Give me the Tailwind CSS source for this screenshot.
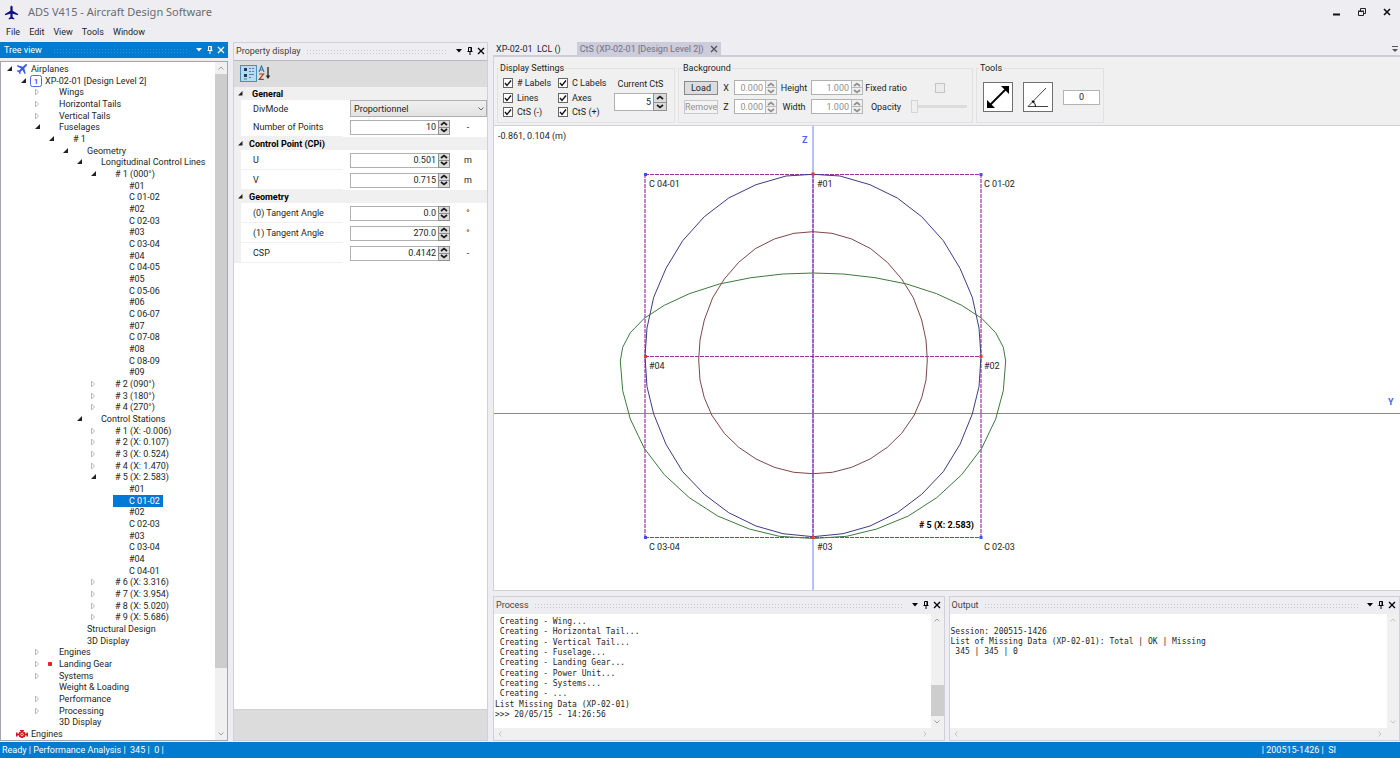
<!DOCTYPE html>
<html lang="en">
<head>
<meta charset="utf-8">
<title>ADS V415 - Aircraft Design Software</title>
<script src="https://cdn.jsdelivr.net/npm/@tailwindcss/browser@4"></script>
</head>
<body class="flex h-screen flex-col overflow-hidden bg-[#eeeef2] font-[Roboto,sans-serif] text-[9px] leading-[12px] text-[#1e1e1e]">

<svg class="hidden" aria-hidden="true">
  <symbol id="plane" viewBox="0 0 24 24"><path d="M12 1c-1.100 0-1.800 1-1.800 2.400V9L1.500 14.300v2.200L10.200 14v5.200L7.600 21.200V23l4.400-1.200L16.400 23v-1.800l-2.600-2V14l8.700 2.500v-2.200L13.800 9V3.400C13.800 2 13.100 1 12 1z"/></symbol>
  <symbol id="down" viewBox="0 0 8 8"><path d="M1 2h6L4 5.500z"/></symbol>
  <symbol id="pin" viewBox="0 0 8 8"><path d="M2.500 .5h3v4h-3zM1.500 4.500h5M4 4.500V8" fill="none" stroke="currentColor"/><path d="M4.500 .5h1v4h-1z"/></symbol>
  <symbol id="close" viewBox="0 0 8 8"><path d="M1 1l6 6M7 1L1 7" fill="none" stroke="currentColor" stroke-width="1.300"/></symbol>
  <symbol id="chev" viewBox="0 0 8 8"><path d="M1.500 5.500L4 3l2.500 2.500" fill="none" stroke="currentColor"/></symbol>
</svg>

<header>
  <div class="flex h-6 items-center pr-[8px] pl-[4px]">
    <svg class="size-[15px] fill-[#10107e]"><use href="#plane"/></svg>
    <h1 class="ml-[9px] font-['Noto_Sans',sans-serif] text-[11px] text-[#6a6a70]">ADS V415 - Aircraft Design Software</h1>
    <div class="ml-auto flex items-center gap-[15px]">
      <button aria-label="Minimize" class="size-[10px]"><svg viewBox="0 0 10 10" class="size-[10px]"><path d="M1 7.500h7" stroke="#111" stroke-width="2"/></svg></button>
      <button aria-label="Restore" class="size-[10px]"><svg viewBox="0 0 10 10" class="size-[10px]" fill="none" stroke="#222"><path d="M1.500 4.500h5v4h-5zM1 4h6M3.500 4V1.500h5v5H7"/></svg></button>
      <button aria-label="Close" class="size-[10px]"><svg viewBox="0 0 10 10" class="size-[10px]"><path d="M2 2l6 6M8 2L2 8" stroke="#111" stroke-width="1.600"/></svg></button>
    </div>
  </div>
  <nav class="flex h-[18px] items-center gap-[9px] pb-[2px] pl-[6px]">
    <button>File</button><button>Edit</button><button>View</button><button>Tools</button><button>Window</button>
  </nav>
</header>

<main class="flex min-h-0 flex-1 pb-[1px]">

  <!-- Tree view -->
  <section class="flex w-[228px] shrink-0 flex-col">
    <div class="flex h-4 items-center gap-[3px] bg-[#007bd0] pr-[3px] pl-[4px] text-white">
      <h2>Tree view</h2>
      <div class="ml-[8px] h-[5px] flex-1 bg-[radial-gradient(#2f93da_1px,transparent_1px)] bg-[length:3px_3px]"></div>
      <button aria-label="Options" class="ml-[4px]"><svg class="size-[8px] fill-current"><use href="#down"/></svg></button>
      <button aria-label="Pin"><svg class="size-[8px] fill-current"><use href="#pin"/></svg></button>
      <button aria-label="Close panel"><svg class="size-[8px]"><use href="#close"/></svg></button>
    </div>
    <div class="mt-[3px] flex min-h-0 flex-1 border border-[#a5a5b0] bg-white">
      <ul id="tree" class="flex min-w-0 flex-1 flex-col pt-[1px]" role="tree"></ul>
      <div class="flex w-[12px] flex-col items-center bg-[#f0f0f0] text-[#a0a0a0]">
        <svg class="my-[2px] size-[8px]"><use href="#chev"/></svg>
        <div class="w-full grow-[593] basis-0 bg-[#cdcdcd]"></div>
        <div class="grow-[60] basis-0"></div>
        <svg class="my-[2px] size-[8px] rotate-180"><use href="#chev"/></svg>
      </div>
    </div>
  </section>

  <!-- Property display -->
  <section class="ml-[5px] flex w-[255px] shrink-0 flex-col border border-[#d0d0da]">
    <div class="flex h-[17px] items-center gap-[3px] pr-[2px] pb-[1px] pl-[2px] text-[#444]">
      <h2>Property display</h2>
      <div class="ml-[2px] h-[5px] flex-1 bg-[radial-gradient(#c9c9d0_1px,transparent_1px)] bg-[length:3px_3px]"></div>
      <button aria-label="Options" class="ml-[4px] text-black"><svg class="size-[8px] fill-current"><use href="#down"/></svg></button>
      <button aria-label="Pin" class="text-black"><svg class="size-[8px] fill-current"><use href="#pin"/></svg></button>
      <button aria-label="Close panel" class="text-black"><svg class="size-[8px]"><use href="#close"/></svg></button>
    </div>
    <div class="flex h-[27px] items-center border-t border-[#b8b8c0] bg-[#dcdcdc] pb-[2px] pl-[6px]">
      <button aria-label="Categorized" class="grid size-[17px] place-items-center border border-[#4a90b0] bg-[#b5dcf0]">
        <svg viewBox="0 0 14 14" class="size-[14px]"><path d="M2 2h3v3H2zM2 8h3v3H2z" fill="#1d3c50"/><path d="M7 2.500h2M10 2.500h2M7 5.500h2M10 5.500h2M7 8.500h5M7 11.500h2M2 13h3" stroke="#5c8298"/></svg>
      </button>
      <button aria-label="Sort alphabetically" class="ml-[1px] flex h-[17px] items-center">
        <svg viewBox="0 0 14 16" class="h-[16px] w-[14px]"><path d="M1 7l2.500-6L6 7M2 5h3" fill="none" stroke="#3c78b4" stroke-width="1.200"/><path d="M1.200 9h4.300L1.200 14.400h4.600" fill="none" stroke="#a03c28" stroke-width="1.200"/><path d="M10 2v10" stroke="#222" stroke-width="1.300"/><path d="M7.800 10.500h4.400L10 14z" fill="#222"/></svg>
      </button>
    </div>
    <div id="props" class="min-h-0 flex-1 bg-white"></div>
    <div class="h-[31px] border-t border-[#d0d0d0] bg-[#dcdcdc]"></div>
  </section>

  <!-- Documents -->
  <section class="ml-[5px] flex min-w-0 flex-1 flex-col">
    <div class="flex h-[15px] items-stretch border-b-2 border-[#ccccdb] pr-[1px] pl-[3px]">
      <div class="flex" role="tablist">
        <button role="tab" aria-selected="false" class="whitespace-pre">XP-02-01  LCL ()</button>
        <div class="ml-[16px] flex items-center gap-[6px] bg-[#ccccdb] px-[3px] text-[#717189]">
          <button role="tab" aria-selected="true">CtS (XP-02-01 [Design Level 2])</button>
          <button aria-label="Close tab"><svg class="size-[8px] text-[#555]"><use href="#close"/></svg></button>
        </div>
      </div>
      <button aria-label="Document list" class="ml-auto"><svg viewBox="0 0 8 8" class="size-[8px]"><path d="M1 1.500h6" stroke="#555"/><path d="M1 4h6L4 7z" fill="#555"/></svg></button>
    </div>
    <div class="flex h-[68px] gap-[3px] border-l border-[#d0d0da] bg-[#f0f0f0] pt-[5px] pl-[3px]">
      <fieldset class="h-[61px] w-[178px] border border-[#e2e2e4] pl-[1px]">
        <legend class="px-[1px]">Display Settings</legend>
        <div class="flex pt-[2px] pl-[4px]">
          <div id="checks" class="grid grid-cols-[55px_56px] grid-rows-[14px_15px_14px] items-center"></div>
          <div class="flex flex-col items-center gap-[3px] pt-[2px]">
            <label for="cts">Current CtS</label>
            <div data-spin="5" data-id="cts" data-size="lg"></div>
          </div>
        </div>
      </fieldset>
      <fieldset class="h-[61px] w-[295px] border border-[#e2e2e4] pl-[3px]">
        <legend class="px-[1px]">Background</legend>
        <div class="grid grid-cols-[34px_16px_43px_34px_52px_46px_58px] grid-rows-[15px_15px] items-center gap-y-[4px] pt-[6px] pl-[2px] text-center">
          <button class="h-[14px] border border-[#8a8a8a] bg-[#dddddd] leading-[12px]">Load</button>
          <label for="bx">X</label><div data-spin="0.000" data-id="bx" data-off="1"></div>
          <label for="bh">Height</label><div data-spin="1.000" data-id="bh" data-off="1"></div>
          <label for="fr">Fixed ratio</label>
          <input id="fr" type="checkbox" disabled class="ml-[4px] size-[10px] appearance-none justify-self-center border border-[#c4c4c4] bg-[#ececec]">
          <button disabled class="h-[14px] border border-[#c8c8c8] bg-[#f4f4f4] leading-[12px] text-[#909090]">Remove</button>
          <label for="bz">Z</label><div data-spin="0.000" data-id="bz" data-off="1"></div>
          <label for="bw">Width</label><div data-spin="1.000" data-id="bw" data-off="1"></div>
          <label for="op">Opacity</label>
          <input id="op" type="range" value="0" disabled class="ml-[2px] h-[13px] w-[56px] appearance-none bg-[linear-gradient(#dcdcdc,#dcdcdc)] bg-[length:100%_3px] bg-center bg-no-repeat [&::-webkit-slider-thumb]:h-[13px] [&::-webkit-slider-thumb]:w-[7px] [&::-webkit-slider-thumb]:appearance-none [&::-webkit-slider-thumb]:border [&::-webkit-slider-thumb]:border-[#d4d4d4] [&::-webkit-slider-thumb]:bg-[#f0f0f0]">
        </div>
      </fieldset>
      <fieldset class="h-[61px] w-[128px] border border-[#e2e2e4] pl-[2px]">
        <legend class="px-[1px]">Tools</legend>
        <div class="flex items-center gap-[10px] pt-[8px] pl-[4px]">
          <button aria-label="Measure distance" class="size-[30px] border border-[#707070] bg-white">
            <svg viewBox="0 0 28 28" class="size-[28px]"><path d="M6 22L22 6" stroke="#000" stroke-width="1.800"/><path d="M25 3v8l-8-8zM3 25v-8l8 8z"/></svg>
          </button>
          <button aria-label="Measure angle" class="size-[30px] border border-[#707070] bg-white">
            <svg viewBox="0 0 28 28" class="size-[28px]" fill="none" stroke="#444"><path d="M22 5L4 23.500h20"/><path d="M9 18.500q2.500 2 2.500 5" stroke="#000"/><path d="M7.500 17.500l3.500 .5-2 2.500z" fill="#000" stroke="none"/></svg>
          </button>
          <input aria-label="Measurement" value="0" class="h-[15px] w-[37px] border border-[#b4b4b4] bg-white text-center">
        </div>
      </fieldset>
    </div>

    <div class="min-h-0 flex-1 border-y border-l border-[#d0d0da] bg-white">
      <svg class="block h-full w-full" font-family="Roboto,sans-serif" font-size="9" fill="#1e1e1e">
        <g transform="translate(-494 -126)">
          <g stroke="#6c84ff"><path d="M494 413.500h3000"/><path d="M813 126v2000"/></g>
          <g fill="none" stroke="#a030a0" stroke-dasharray="4 1"><path d="M645 174.500h336M645 356.500h336M645 537.500h336"/><path stroke="#960096" d="M645 174v363M981 174v363M813 174v363"/></g>
          <g fill="none">
            <g id="half">
              <polyline stroke="#3c3c84" points="813,174.300 840,176 870,184.700 897.300,198 921.700,216.700 943.300,240.700 960,268.300 972.300,297.300 979,328 981,356.500 979,386.700 972.300,414 960,444.300 943.300,471.700 921.700,494.300 897.300,512.700 870,526 843,533.700 813,536.700"/>
              <polyline stroke="#7c4848" points="813,231.700 832,233.300 851.700,239 870.700,248.700 887.300,262.300 901.700,279 913.300,297.700 921.700,320 926,340 927.300,360 926,380 921.700,397.700 914.300,415 901.700,433.300 887.300,447.300 870,459 851.700,467.300 832.300,472.300 813,473.700"/>
              <polyline stroke="#3c7a3c" points="813,273 843.300,274 875,277.700 906.700,284 936.700,293.700 961.700,305.300 981.700,318.300 995.700,332.700 1003.300,347.300 1005.700,361 1003.300,390.700 995.700,419 981.700,448.300 961.700,474.700 936.700,497.700 908.300,516 876.700,529 846.700,536.300 813,538.500"/>
            </g>
            <use href="#half" transform="translate(1626 0) scale(-1 1)"/>
          </g>
          <g fill="#f03030"><path d="M811.500 172.500h3v3h-3zM979.500 355h3v3h-3zM811.500 536h3v3h-3zM644 355h3v3h-3z"/></g>
          <g fill="#3c50f0"><path d="M644 173h3v3h-3zM979.500 173h3v3h-3zM979.500 536h3v3h-3zM644 536h3v3h-3z"/></g>
          <text x="498" y="139">-0.861, 0.104 (m)</text>
          <text x="649" y="187">C 04-01</text><text x="817" y="187">#01</text><text x="984" y="187">C 01-02</text>
          <text x="649" y="369">#04</text><text x="984" y="369">#02</text>
          <text x="649" y="550">C 03-04</text><text x="817" y="550">#03</text><text x="984" y="550">C 02-03</text>
          <text x="919" y="528" font-weight="700" fill="#000"># 5 (X: 2.583)</text>
          <g font-weight="700" fill="#4a62f0"><text x="802" y="143">Z</text><text x="1388" y="405">Y</text></g>
        </g>
      </svg>
    </div>

    <div class="mt-[5px] flex h-[145px] gap-[4px]">
      <section class="flex min-w-0 flex-1 flex-col border border-[#d0d0da]">
        <div class="flex h-[17px] items-center gap-[3px] pr-[3px] pb-[1px] pl-[2px] text-[#444]">
          <h2>Process</h2>
          <div class="ml-[2px] h-[5px] flex-1 bg-[radial-gradient(#c9c9d0_1px,transparent_1px)] bg-[length:3px_3px]"></div>
          <button aria-label="Options" class="ml-[4px] text-black"><svg class="size-[8px] fill-current"><use href="#down"/></svg></button>
          <button aria-label="Pin" class="text-black"><svg class="size-[8px] fill-current"><use href="#pin"/></svg></button>
          <button aria-label="Close panel" class="text-black"><svg class="size-[8px]"><use href="#close"/></svg></button>
        </div>
        <div class="flex min-h-0 flex-1 bg-white">
          <div id="process" class="flex min-w-0 flex-1 flex-col pt-[3px] pb-[8px] pl-[1px] font-['DejaVu_Sans_Mono',monospace] text-[8px] leading-[10px] whitespace-pre"></div>
          <div class="flex w-[13px] flex-col items-center bg-[#f0f0f0] text-[#a0a0a0]">
            <svg class="my-[2px] size-[8px]"><use href="#chev"/></svg>
            <div class="flex-1"></div>
            <div class="h-[31px] w-full bg-[#cdcdcd]"></div>
            <svg class="my-[2px] size-[8px] rotate-180"><use href="#chev"/></svg>
          </div>
        </div>
        <div class="flex h-[12px] items-center justify-between bg-[#f0f0f0] pr-[15px] pl-[2px] text-[#c4c4c4]">
          <svg class="size-[8px] -rotate-90"><use href="#chev"/></svg><svg class="size-[8px] rotate-90"><use href="#chev"/></svg>
        </div>
      </section>
      <section class="flex min-w-0 flex-1 flex-col border border-[#d0d0da]">
        <div class="flex h-[17px] items-center gap-[3px] pr-[3px] pb-[1px] pl-[2px] text-[#444]">
          <h2>Output</h2>
          <div class="ml-[2px] h-[5px] flex-1 bg-[radial-gradient(#c9c9d0_1px,transparent_1px)] bg-[length:3px_3px]"></div>
          <button aria-label="Options" class="ml-[4px] text-black"><svg class="size-[8px] fill-current"><use href="#down"/></svg></button>
          <button aria-label="Pin" class="text-black"><svg class="size-[8px] fill-current"><use href="#pin"/></svg></button>
          <button aria-label="Close panel" class="text-black"><svg class="size-[8px]"><use href="#close"/></svg></button>
        </div>
        <div class="flex min-h-0 flex-1 bg-white">
          <div class="min-w-0 flex-1 pt-[13px] pl-[1px] font-['DejaVu_Sans_Mono',monospace] text-[8px] leading-[10px] whitespace-pre">Session: 200515-1426
List of Missing Data (XP-02-01): Total | OK | Missing
 345 | 345 | 0</div>
          <div class="flex w-[12px] flex-col items-center justify-between bg-[#f0f0f0] py-[2px] text-[#c4c4c4]">
            <svg class="size-[8px]"><use href="#chev"/></svg><svg class="size-[8px] rotate-180"><use href="#chev"/></svg>
          </div>
        </div>
        <div class="flex h-[12px] items-center justify-between bg-[#f0f0f0] pr-[15px] pl-[2px] text-[#c4c4c4]">
          <svg class="size-[8px] -rotate-90"><use href="#chev"/></svg><svg class="size-[8px] rotate-90"><use href="#chev"/></svg>
        </div>
      </section>
    </div>
  </section>
</main>

<footer class="flex h-[16px] items-center justify-between bg-[#007bd0] pr-[64px] pl-[2px] whitespace-pre text-white">
  <span>Ready | Performance Analysis |  345 |  0 |</span>
  <span>| 200515-1426 |  SI</span>
</footer>

<script>
// Rows are [level, state, label, icon]; state is o(pen), c(losed) or - (leaf).
const rows = [[0,'o','Airplanes','plane'],[1,'o','XP-02-01 [Design Level 2]','one'],[2,'c','Wings'],[2,'c','Horizontal Tails'],[2,'c','Vertical Tails'],[2,'o','Fuselages'],[3,'o','# 1'],[4,'o','Geometry'],[5,'o','Longitudinal Control Lines'],[6,'o','# 1 (000°)'],
...'#01|C 01-02|#02|C 02-03|#03|C 03-04|#04|C 04-05|#05|C 05-06|#06|C 06-07|#07|C 07-08|#08|C 08-09|#09'.split('|').map(t=>[7,'-',t]),
[6,'c','# 2 (090°)'],[6,'c','# 3 (180°)'],[6,'c','# 4 (270°)'],[5,'o','Control Stations'],[6,'c','# 1 (X: -0.006)'],[6,'c','# 2 (X: 0.107)'],[6,'c','# 3 (X: 0.524)'],[6,'c','# 4 (X: 1.470)'],[6,'o','# 5 (X: 2.583)'],
[7,'-','#01'],[7,'-','C 01-02','selected'],...'#02|C 02-03|#03|C 03-04|#04|C 04-01'.split('|').map(t=>[7,'-',t]),
[6,'c','# 6 (X: 3.316)'],[6,'c','# 7 (X: 3.954)'],[6,'c','# 8 (X: 5.020)'],[6,'c','# 9 (X: 5.686)'],[4,'-','Structural Design'],[4,'-','3D Display'],[2,'c','Engines'],[2,'c','Landing Gear','dot'],[2,'c','Systems'],[2,'-','Weight & Loading'],[2,'c','Performance'],[2,'c','Processing'],[2,'-','3D Display'],[0,'-','Engines','engine']];
const arrows = {
  o:'<path d="M9 3v5H4z" fill="#222"/>',
  c:'<path d="M4.500 3v6l3-3z" fill="none" stroke="#b8b8b8"/>',
  '-':''
};
const icons = {
  plane:'<svg class="size-[13px] rotate-45 fill-[#3c5ce8]"><use href="#plane"/></svg>',
  one:'<svg viewBox="0 0 12 12" class="size-[12px]"><rect x=".5" y=".5" width="11" height="11" rx="2" fill="#fff" stroke="#4a6ae8"/><text x="6" y="9" text-anchor="middle" font-size="8" font-weight="600" fill="#3454d8">1</text></svg>',
  dot:'<svg viewBox="0 0 12 12" class="size-[12px]"><rect x="4" y="4" width="4" height="4" rx="1" fill="#e81c24"/></svg>',
  engine:'<svg viewBox="0 0 12 12" class="size-[12px]"><path d="M0 4.500h1.500v1H3V4h1.500V3H4V2h4v1h-.5v1H9v1.500h1.500v-1H12v4h-1.500v-1H9V9H7.500v1h-3V9H3V7.500H1.500v1H0z" fill="#d01c24"/><circle cx="6" cy="6.500" r="1.300" fill="none" stroke="#fff" stroke-width=".7"/></svg>'
};
document.getElementById('tree').innerHTML = rows.map(([l,s,t,i]) => `<li role="treeitem" class="flex min-h-0 flex-1 basis-0 items-center" style="padding-left:${2+14*l}px"><svg viewBox="0 0 12 12" class="size-[12px] shrink-0">${arrows[s]}</svg><span class="flex h-[12px] items-center gap-[2px] whitespace-nowrap ${i==='selected'?'bg-[#0078d7] pr-[3px] text-white':''}"><span class="grid w-[14px] place-items-center">${icons[i]||''}</span>${t}</span></li>`).join('');

const tri = up => `<svg viewBox="0 0 8 5" class="h-[5px] w-[8px] ${up?'':'rotate-180'}"><path d="M1 4l3-2.500L7 4" fill="none" stroke="currentColor" stroke-width="1.700"/></svg>`;
const spin = (v,id,off,lg) => `<div class="flex ${lg?'h-[18px] w-[53px]':'h-[15px] w-full'} ${off?'text-[#909090]':''}"><input id="${id}" value="${v}" ${off?'disabled':''} class="min-w-0 flex-1 border border-r-0 border-[#b0b0b0] bg-white pr-[2px] text-right"><div class="flex ${lg?'w-[14px]':'w-[12px]'} flex-col border ${off?'border-[#b8b8b8] bg-[#f0f0f0]':'border-[#909090] bg-[#dcdcdc]'}"><button aria-label="Increase" ${off?'disabled':''} class="grid min-h-0 flex-1 place-items-center border-b ${off?'border-[#b8b8b8]':'border-[#909090]'}">${tri(1)}</button><button aria-label="Decrease" ${off?'disabled':''} class="grid min-h-0 flex-1 place-items-center">${tri(0)}</button></div></div>`;
document.querySelectorAll('[data-spin]').forEach(e => { e.innerHTML = spin(e.dataset.spin, e.dataset.id, e.dataset.off, e.dataset.size); });

const groups = [['General',[['DivMode','select'],['Number of Points','10','-']]],['Control Point (CPi)',[['U','0.501','m'],['V','0.715','m']]],['Geometry',[['(0) Tangent Angle','0.0','°'],['(1) Tangent Angle','270.0','°'],['CSP','0.4142','-']]]];
document.getElementById('props').innerHTML = groups.map(([g,items],gi) => `<h3 class="flex h-[13px] items-center bg-[#f0f0f0] font-bold text-black"><svg viewBox="0 0 12 12" class="size-[12px]"><path d="M8.500 3v4.500H4z" fill="#222"/></svg><span class="${gi?'ml-[3px]':'ml-[6px]'}">${g}</span></h3>` + items.map(([n,v,u],i) => {
  const id = `p${gi}${i}`;
  return v==='select'
    ? `<div class="flex h-[17px] items-center border-l-[7px] border-[#f0f0f0]"><label for="${id}" class="w-[109px] pl-[12px]">${n}</label><div class="grid flex-1"><select id="${id}" class="col-start-1 row-start-1 h-[17px] appearance-none border border-[#b0b0b0] bg-linear-to-b from-[#f0f0f0] to-[#e2e2e2] pl-[3px] leading-[12px]"><option>Proportionnel</option></select><svg class="pointer-events-none col-start-1 row-start-1 mr-[2px] size-[8px] rotate-180 self-center justify-self-end text-[#666]"><use href="#chev"/></svg></div></div>`
    : `<div class="flex h-[20px] items-center border-l-[7px] border-[#f0f0f0]"><label for="${id}" class="flex h-full w-[102px] items-center border-b border-[#f0f0f0] pl-[12px]">${n}</label><div class="ml-[7px] w-[100px]">${spin(v,id)}</div><span class="w-[36px] text-center">${u}</span></div>`;
}).join('')).join('');

document.getElementById('checks').innerHTML = ['# Labels','C Labels','Lines','Axes','CtS (-)','CtS (+)'].map(t => `<label class="flex items-center gap-[4px]"><span class="grid size-[10px]"><input type="checkbox" checked class="peer col-start-1 row-start-1 size-[10px] appearance-none border border-[#666] bg-white"><svg viewBox="0 0 10 10" class="pointer-events-none invisible col-start-1 row-start-1 size-[10px] peer-checked:visible"><path d="M2 5l2 2.500L8 2.500" fill="none" stroke="#111" stroke-width="1.400"/></svg></span>${t}</label>`).join('');

document.getElementById('process').innerHTML = [' Creating - Wing...',' Creating - Horizontal Tail...',' Creating - Vertical Tail...',' Creating - Fuselage...',' Creating - Landing Gear...',' Creating - Power Unit...',' Creating - Systems...',' Creating - ...','List Missing Data (XP-02-01)','&gt;&gt;&gt; 20/05/15 - 14:26:56'].map(t => `<div class="flex min-h-0 flex-1 basis-0 items-center">${t}</div>`).join('');
</script>
</body>
</html>
